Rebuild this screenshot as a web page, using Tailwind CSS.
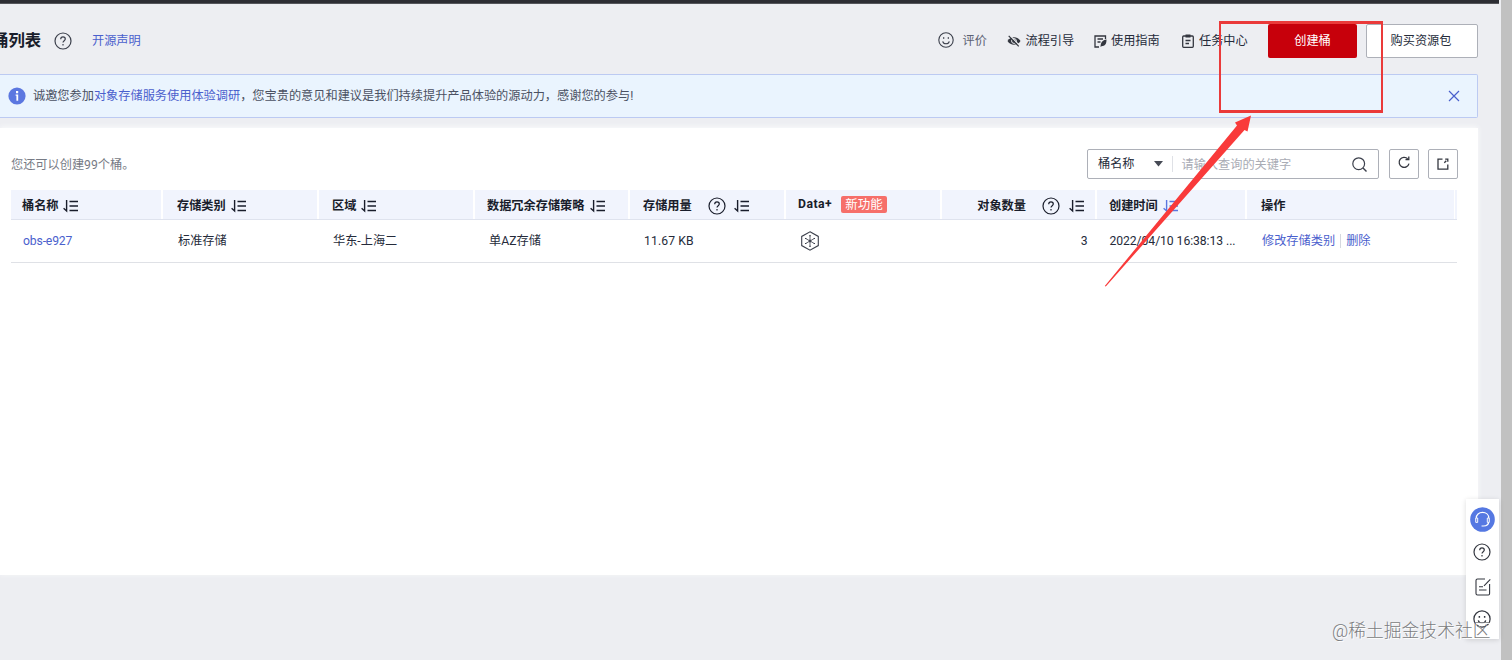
<!DOCTYPE html>
<html lang="zh-CN">
<head>
<meta charset="utf-8">
<title>桶列表</title>
<script src="https://cdn.jsdelivr.net/npm/@tailwindcss/browser@4"></script>
</head>
<body class="relative w-[1512px] h-[660px] overflow-hidden bg-[#edeef2] font-[Roboto,'Noto_Sans_CJK_SC',sans-serif] text-[12.2px] leading-[18px] text-[#252b3a] whitespace-nowrap">
<svg class="hidden">
  <symbol id="help" viewBox="0 0 18 18"><circle cx="9" cy="9" r="8" fill="none" stroke="currentColor" stroke-width="1.2"/><path d="M6.7 7.2c0-1.4 1-2.3 2.3-2.3s2.3.9 2.3 2.1c0 1.6-2.3 1.8-2.3 3.6M9 12v1.4" fill="none" stroke="currentColor" stroke-width="1.2"/></symbol>
  <symbol id="sort" viewBox="0 0 16 14"><path d="M3.600 1v11L.6 9.300" fill="none" stroke="currentColor" stroke-width="1.400"/><path d="M6.500 2.500H15M6.500 7H15M6.500 11.500H15" fill="none" stroke="currentColor" stroke-width="1.700"/></symbol>
  <symbol id="smile" viewBox="0 0 16 16"><circle cx="8" cy="8" r="7.2" fill="none" stroke="currentColor" stroke-width="1.1"/><path d="M4.7 9.3c.4 1.7 1.7 2.5 3.3 2.5s2.900-.8 3.300-2.500" fill="none" stroke="currentColor" stroke-width="1.1"/><path d="M5 5.300h1.300v1.500H5zM9.700 5.300H11v1.500H9.700z" fill="currentColor"/></symbol>
</svg>

<div class="flex h-full">
  <div class="w-[1501px] h-full flex flex-col">
    <div class="h-[4px] w-[1499px] shrink-0 bg-[#2d2e34] border-b border-[#55565b]"></div>

    <header class="h-[70px] shrink-0 flex items-center pt-[4px] pr-[23px]">
      <h1 class="-ml-[8px] w-[50px] text-[16.4px] leading-6 font-bold text-[#191d2b]">桶列表</h1>
      <svg class="ml-[12px] w-[18px] h-[18px] text-[#3c404c]"><use href="#help"/></svg>
      <a class="ml-[20px] text-[#4a60cd]">开源声明</a>
      <div class="ml-auto flex items-center">
        <svg class="w-[16px] h-[16px] mb-[2px] text-[#3c404c]"><use href="#smile"/></svg>
        <span class="ml-[9px] w-[44px] text-[#5c6173]">评价</span>
        <svg class="w-[14px] h-[12px]" viewBox="0 0 14 12"><path d="M.5 6C3.500 1 10.500 1 13.500 6c-3 5-10 5-13 0z" fill="#33363f"/><circle cx="7" cy="6" r="2.400" fill="none" stroke="#edeef2" stroke-width="1"/><path d="M2.700.2l10 10.500" stroke="#edeef2" stroke-width="1.200"/><path d="M1.700.8l10 10.500" stroke="#33363f" stroke-width="1.200"/></svg>
        <span class="ml-[5px] w-[68px]">流程引导</span>
        <svg class="w-[13px] h-[13px]" viewBox="0 0 13 13"><path d="M5 12H1V1h10.500v3M3.500 4h5.500M3.500 7h3" fill="none" stroke="#33363f" stroke-width="1.300"/><path d="M12.500 4.500c-4 .5-6 3-6 7.500l1-.8c3.500 0 5-2 5-6.700z" fill="#33363f"/></svg>
        <span class="ml-[4.500px] w-[71px]">使用指南</span>
        <svg class="w-[12px] h-[14px]" viewBox="0 0 12 14"><rect x=".7" y="2" width="10.600" height="11.300" rx="1" fill="none" stroke="#33363f" stroke-width="1.300"/><path d="M3.500.500h5v3h-5z" fill="#33363f"/><path d="M3.500 6.500h5M3.500 9.500h3.500" stroke="#33363f" stroke-width="1.300"/></svg>
        <span class="ml-[5px] w-[69px]">任务中心</span>
        <button class="w-[89px] h-[34px] rounded-[2px] bg-[#c7000b] text-white">创建桶</button>
        <button class="ml-[9px] w-[112px] h-[34px] rounded-[2px] bg-white border border-[#adb0b8] pr-[2px]">购买资源包</button>
      </div>
    </header>

    <div class="h-[44px] w-[1478px] shrink-0 flex items-center border border-l-0 border-[#bccaf2] rounded-r-[2px] bg-[#eaf4fe] pl-[8px] pr-[17px] text-[#4b5162]">
      <svg class="w-[18px] h-[18px]" viewBox="0 0 18 18"><circle cx="9" cy="9" r="8.600" fill="#5b77e0"/><path d="M7.600 7.600h2.600v6.200H8.400V8.800h-.8zM8 4h2.200v2.200H8z" fill="#fff"/></svg>
      <p class="ml-[7px]">诚邀您参加<a class="text-[#4a60cd]">对象存储服务使用体验调研</a>，您宝贵的意见和建议是我们持续提升产品体验的源动力，感谢您的参与!</p>
      <svg class="ml-auto w-[12px] h-[12px]" viewBox="0 0 12 12"><path d="M1 1l10 10M11 1L1 11" stroke="#4a60cd" stroke-width="1.200"/></svg>
    </div>

    <main class="mt-[10px] w-[1478px] h-[447px] shrink-0 bg-white pt-[20px] pl-[11px] pr-[20px] shadow-[0_-1px_5px_#fafbfc]">
      <div class="flex items-center h-[31px]">
        <span class="mt-[2px] text-[#777b85]">您还可以创建99个桶。</span>
        <div class="ml-auto w-[292px] h-[30px] flex items-center border border-[#adb0b8] rounded-[2px] pl-[10px] pr-[11px]">
          <span class="w-[55.500px]">桶名称</span>
          <svg class="w-[9px] h-[6px]" viewBox="0 0 9 6"><path d="M0 0h9L4.500 5.500z" fill="#464a55"/></svg>
          <span class="ml-[9px] w-px h-[16px] bg-[#dfe1e6]"></span>
          <span class="ml-[9px] pt-[2px] text-[#a9acb5]">请输入查询的关键字</span>
          <svg class="ml-auto mt-[2px] w-[15px] h-[15px]" viewBox="0 0 15 15"><circle cx="6.700" cy="6.700" r="5.900" fill="none" stroke="#3c404c" stroke-width="1.200"/><path d="M11 11l3.500 3.500" stroke="#3c404c" stroke-width="1.400"/></svg>
        </div>
        <button class="ml-[10px] w-[30px] h-[30px] flex items-center justify-center border border-[#adb0b8] rounded-[2px]">
          <svg class="w-[12px] h-[13px] mb-[2px]" viewBox="0 0 12 13"><path d="M9.700 2.800A5 5 0 1 0 11 7.600M10.800.5v3.200H7.500" fill="none" stroke="#33363f" stroke-width="1.300"/></svg>
        </button>
        <button class="ml-[9px] w-[30px] h-[30px] flex items-center justify-center border border-[#adb0b8] rounded-[2px]">
          <svg class="w-[12px] h-[12px]" viewBox="0 0 12 12"><path d="M5.500 1.200H1v9.900h9.800V6.500M7.300 4.700l2-2M8.200 1.200h2.600V3.800" fill="none" stroke="#33363f" stroke-width="1.300"/></svg>
        </button>
      </div>

      <div class="mt-[11px] mr-[1px] flex h-[30px] bg-[#f1f4fd] border-b border-[#dfe3ee] font-bold text-[#191d2b]">
        <div class="w-[152px] flex items-center pt-[2px] border-r-2 border-white pl-[11px]">桶名称<svg class="ml-[4px] w-[16px] h-[14px]"><use href="#sort"/></svg></div>
        <div class="w-[156px] flex items-center pt-[2px] border-r-2 border-white pl-[14px]">存储类别<svg class="ml-[5px] w-[16px] h-[14px]"><use href="#sort"/></svg></div>
        <div class="w-[156px] flex items-center pt-[2px] border-r-2 border-white pl-[13px]">区域<svg class="ml-[5px] w-[16px] h-[14px]"><use href="#sort"/></svg></div>
        <div class="w-[155px] flex items-center pt-[2px] border-r-2 border-white pl-[12px]">数据冗余存储策略<svg class="ml-[5px] w-[16px] h-[14px]"><use href="#sort"/></svg></div>
        <div class="w-[156px] flex items-center pt-[2px] border-r-2 border-white pl-[13px]">存储用量<svg class="ml-[16px] w-[18px] h-[18px]"><use href="#help"/></svg><svg class="ml-[8px] w-[16px] h-[14px]"><use href="#sort"/></svg></div>
        <div class="w-[156px] flex items-center border-r-2 border-white pl-[12px]"><span class="w-[43px] pb-[1px] tracking-[.5px]">Data+</span><span class="h-[17px] w-[46px] rounded-[2px] bg-[#f66f6a] text-white font-normal text-center leading-[17px] text-[12.500px]">新功能</span></div>
        <div class="w-[155px] flex items-center pt-[2px] justify-end border-r-2 border-white pr-[10px]">对象数量<svg class="ml-[16px] w-[18px] h-[18px]"><use href="#help"/></svg><svg class="ml-[9px] w-[16px] h-[14px]"><use href="#sort"/></svg></div>
        <div class="w-[150px] flex items-center pt-[2px] border-r-2 border-white pl-[12px]">创建时间<svg class="ml-[5px] w-[16px] h-[14px] text-[#5b77e0]"><use href="#sort"/></svg></div>
        <div class="w-[208px] flex items-center pt-[2px] border-r border-white pl-[14px]">操作</div>
      </div>

      <div class="mr-[1px] flex items-center h-[43px] border-b border-[#dfe1e6]">
        <a class="w-[152px] pl-[12px] text-[#4a60cd] tracking-[-.15px]">obs-e927</a>
        <span class="w-[156px] pl-[15px]">标准存储</span>
        <span class="w-[156px] pl-[14px]">华东-上海二</span>
        <span class="w-[155px] pl-[14px]">单AZ存储</span>
        <span class="w-[156px] pl-[14px] tracking-[.1px]">11.67 KB</span>
        <span class="w-[156px] pl-[14px]"><svg class="w-[20px] h-[20px]" viewBox="0 0 20 20" fill="none" stroke="#3c404c"><path d="M10 .8l8.300 4.600v9.200L10 19.200l-8.300-4.600V5.400z" stroke-width="1.100"/><path d="M10 5v10M5.700 7.500l8.600 5M14.300 7.500l-8.600 5" stroke-width=".8"/><path d="M9.300 4.700h1.400M9.300 15.300h1.400M5 7.500h1.300M13.700 7.500H15M5 12.500h1.300M13.700 12.500H15" stroke-width="1.200"/><circle cx="10" cy="10" r="1" fill="#3c404c"/></svg></span>
        <span class="w-[155px] pr-[9.500px] text-right">3</span>
        <span class="w-[150px] pl-[12.500px] tracking-[-.07px]">2022/04/10 16:38:13 ...</span>
        <span class="pl-[15px] flex items-center text-[#4a60cd]"><a>修改存储类别</a><i class="mx-[5px] w-px h-[14px] bg-[#d5d8df]"></i><a>删除</a></span>
      </div>
    </main>
  </div>
  <div class="w-[11px] h-full bg-[#c1c1c1]"></div>
</div>

<!-- Floating help toolbar -->
<aside class="absolute left-[1466px] top-[499px] w-[33px] h-[140px] bg-white shadow-[0_1px_5px_rgba(0,0,0,.14)] flex flex-col items-center pt-[8px] pr-[1px] text-[#33363f]">
  <svg class="w-[25px] h-[25px] shrink-0" viewBox="0 0 26 26"><circle cx="13" cy="13" r="12.800" fill="#5578e2"/><path d="M6.500 15v-3.500C6.500 8 9.300 5.600 13 5.600s6.500 2.400 6.500 5.900V15c0 2.700-2 4.500-5.500 4.800h-2" fill="none" stroke="#fff" stroke-width="1.200"/><path d="M6 11.500h2V16H6zM18 11.500h2V16h-2z" fill="#5578e2" stroke="#fff" stroke-width="1"/></svg>
  <svg class="mt-[11px] w-[18px] h-[18px] shrink-0"><use href="#help"/></svg>
  <svg class="mt-[17px] ml-[1px] w-[16px] h-[18px] shrink-0" viewBox="0 0 16 18" fill="none" stroke="#33363f" stroke-width="1.100"><path d="M10 1H2.500Q1 1 1 2.500v13Q1 17 2.500 17h10.800q1.300 0 1.300-1.500V6M4 8.800h4M4 12h7.500M9 7.800L15.300 1.300"/></svg>
  <svg class="mt-[14px] w-[18px] h-[18px] shrink-0" viewBox="0 0 16 16"><use href="#smile"/></svg>
</aside>

<!-- Annotation frame and arrow -->
<div class="absolute left-[1219px] top-[21px] w-[164px] h-[92px] border-[2.500px] border-y-[3px] border-[#ea3a3a]"></div>
<svg class="absolute left-0 top-0 w-[1512px] h-[660px] pointer-events-none" viewBox="0 0 1512 660"><path d="M1104.800 286L1237 125.500L1235 122.500L1251 115.500L1247.500 131.500L1244.500 130L1105.800 286.500z" fill="#f93a3a"/></svg>
<div class="absolute left-[1332px] top-[619px] text-[17.800px] leading-6 font-light text-[#7b7c80] [text-shadow:1px_1px_0_#fff]">@稀土掘金技术社区</div>
</body>
</html>
